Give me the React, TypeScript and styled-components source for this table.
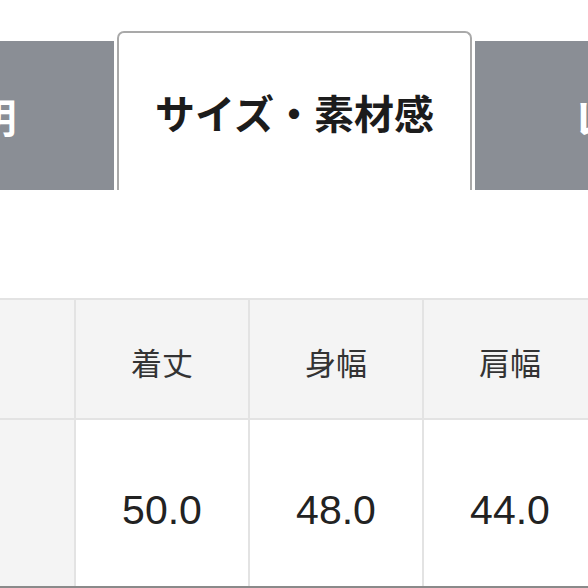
import React from "react";
import styled, { createGlobalStyle } from "styled-components";

const Global = createGlobalStyle`
  html, body { margin: 0; padding: 0; background: #ffffff; }
  body { font-family: "Noto Sans CJK JP", "Noto Sans", sans-serif; }
`;

const Page = styled.div`
  width: 588px;
  height: 588px;
  overflow: hidden;
  background: #ffffff;
`;

const TabBar = styled.div`
  display: flex;
  align-items: flex-end;
  gap: 3px;
  margin: 31px 0 0 -241px;
  width: max-content;
`;

const Tab = styled.div<{ $active?: boolean }>`
  flex: 0 0 355px;
  box-sizing: border-box;
  height: ${(p) => (p.$active ? "159px" : "149px")};
  display: flex;
  align-items: center;
  justify-content: center;
  font-family: "Noto Sans CJK JP", sans-serif;
  font-size: 40px;
  font-weight: 700;
  line-height: 1;
  color: ${(p) => (p.$active ? "#1c1c1c" : "#ffffff")};
  background: ${(p) => (p.$active ? "#ffffff" : "#8a8e95")};
  border: ${(p) => (p.$active ? "2px solid #a9a9a9" : "none")};
  border-bottom: none;
  border-radius: ${(p) => (p.$active ? "7px 7px 0 0" : "0")};
  padding-top: ${(p) => (p.$active ? "0" : "0")};
`;

const Table = styled.div`
  margin-top: 108px;
  display: grid;
  grid-template-columns: 74px 172px 172px 172px;
  grid-template-rows: 118px 166px;
  gap: 2px;
  width: max-content;
  background: #e3e3e3;
  border-top: 2px solid #e3e3e3;
  border-bottom: 2px solid #8a8a8a;
`;

const HeadCell = styled.div`
  background: #f4f4f4;
  display: flex;
  align-items: center;
  justify-content: center;
  padding-top: 5px;
  box-sizing: border-box;
  font-family: "Noto Sans CJK JP", sans-serif;
  font-size: 31px;
  font-weight: 400;
  color: #333333;
  line-height: 1;
`;

const ValueCell = styled.div<{ $label?: boolean }>`
  background: ${(p) => (p.$label ? "#f4f4f4" : "#ffffff")};
  display: flex;
  align-items: center;
  justify-content: center;
  padding-top: 14px;
  box-sizing: border-box;
  font-family: "Liberation Sans", Arial, sans-serif;
  font-size: 41px;
  color: #222222;
  line-height: 1;
`;

const headers = ["着丈", "身幅", "肩幅"];
const values = ["50.0", "48.0", "44.0"];

export default function App() {
  return (
    <Page>
      <Global />
      <TabBar>
        <Tab>商品説明</Tab>
        <Tab $active>サイズ・素材感</Tab>
        <Tab>レビュー</Tab>
      </TabBar>
      <Table>
        <HeadCell />
        {headers.map((h) => (
          <HeadCell key={h}>{h}</HeadCell>
        ))}
        <ValueCell $label />
        {values.map((v, i) => (
          <ValueCell key={i}>{v}</ValueCell>
        ))}
      </Table>
    </Page>
  );
}
